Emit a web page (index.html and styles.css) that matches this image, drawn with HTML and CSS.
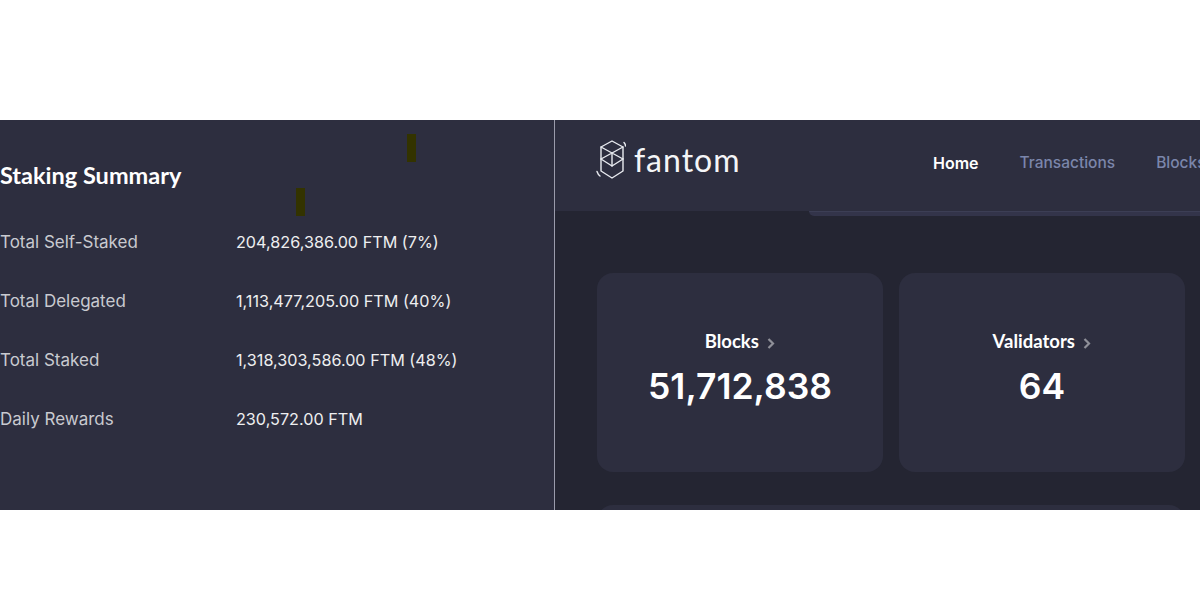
FILE: index.html
```html
<!DOCTYPE html>
<html lang="en">
<head>
    <meta charset="UTF-8">
    <meta name="viewport" content="width=device-width, initial-scale=1.0">
    <title>Fantom Staking Summary</title>
    <link rel="stylesheet" href="styles.css">
</head>
<body>

    <div class="shot">
        <section class="summary">
            <span class="mark mark-top"></span>
            <span class="mark mark-low"></span>
            <h2>Staking Summary</h2>
            <div class="row"><div class="row-label">Total Self-Staked</div><div class="row-value">204,826,386.00 FTM (7%)</div></div>
            <div class="row"><div class="row-label">Total Delegated</div><div class="row-value">1,113,477,205.00 FTM (40%)</div></div>
            <div class="row"><div class="row-label">Total Staked</div><div class="row-value">1,318,303,586.00 FTM (48%)</div></div>
            <div class="row"><div class="row-label">Daily Rewards</div><div class="row-value">230,572.00 FTM</div></div>
        </section>

        <section class="explorer">
            <header class="topbar">
                <div class="logo">
                    <svg class="logo-icon" width="30" height="39" viewBox="0 0 30 39" fill="none" stroke="#e9ebf0" stroke-width="1.4" stroke-linejoin="round" stroke-linecap="round">
                        <!-- prism outline -->
                        <path d="M16 1 L27 7 V31 L16 38 L5 31 V7 Z"/>
                        <path d="M5 7 L27 19 M27 7 L5 19"/>
                        <path d="M5 19 L16 26 L27 19"/>
                        <path d="M16 13 V26"/>
                        <!-- little swirl ticks -->
                        <path d="M28 2.5 Q29.5 4 29.5 6"/>
                        <path d="M1 31.5 Q2 34.5 4 36"/>
                    </svg>
                    <span class="logo-text">fantom</span>
                </div>
                <nav class="nav">
                    <a class="nav-item active">Home</a>
                    <a class="nav-item">Transactions</a>
                    <a class="nav-item">Blocks</a>
                </nav>
            </header>
            <div class="subbar"></div>

            <div class="cards">
                <div class="card">
                    <div class="card-title">Blocks
                        <svg class="chevron" width="8" height="11" viewBox="0 0 8 11" fill="none" stroke="#8f9099" stroke-width="2.2"><path d="M1.5 1 L6 5.5 L1.5 10"/></svg>
                    </div>
                    <div class="card-number">51,712,838</div>
                </div>
                <div class="card">
                    <div class="card-title">Validators
                        <svg class="chevron" width="8" height="11" viewBox="0 0 8 11" fill="none" stroke="#8f9099" stroke-width="2.2"><path d="M1.5 1 L6 5.5 L1.5 10"/></svg>
                    </div>
                    <div class="card-number">64</div>
                </div>
            </div>

            <div class="next-card"></div>
        </section>
    </div>

</body>
</html>
```

FILE: styles.css
```css
body {
    margin: 0;
    background-color: #fff;
    font-family: 'Inter', sans-serif;
}
.shot {
    display: flex;
    width: 1200px;
    height: 390px;
    margin-top: 120px;
    overflow: hidden;
}
.summary {
    position: relative;
    width: 554px;
    flex-shrink: 0;
    background-color: #2d2e3f;
    color: #fff;
}
.summary h2 {
    margin: 0;
    padding-top: 41px;
    font-size: 23.5px;
    line-height: 28px;
    font-weight: 700;
    font-family: 'Lato', sans-serif;
    height: 51px;
}
.row {
    display: flex;
    height: 59px;
    align-items: center;
    font-size: 16.2px;
}
.row-label {
    width: 236px;
    font-size: 17px;
    color: #c9cad0;
}
.row-value {
    color: #eeeef0;
}
.mark {
    position: absolute;
    width: 9px;
    height: 28px;
    background-color: #333300;
}
.mark-top {
    left: 407px;
    top: 14px;
}
.mark-low {
    left: 296px;
    top: 68px;
}
.explorer {
    position: relative;
    flex: 1;
    min-width: 0;
    border-left: 1px solid #9a9bab;
    background-color: #242532;
    overflow: hidden;
}
.topbar {
    display: flex;
    align-items: center;
    height: 91px;
    box-sizing: border-box;
    padding: 0 0 12px 41px;
    background-color: #2d2e3f;
}
.logo {
    display: flex;
    align-items: center;
    gap: 8px;
    width: 337px;
    flex-shrink: 0;
}
.logo-text {
    font-family: 'Lato', sans-serif;
    font-size: 32px;
    letter-spacing: 1px;
    line-height: 39px;
    color: #f4f5f7;
}
.nav {
    display: flex;
    gap: 41px;
    margin-top: 7px;
    white-space: nowrap;
    font-size: 15.5px;
    font-weight: 500;
}
.nav-item {
    color: #7b86ab;
}
.nav-item.active {
    color: #fff;
    font-size: 16px;
    font-weight: 600;
}
.subbar {
    height: 5px;
    margin-left: 254px;
    background-color: #33344a;
    border-top: 1px solid #3c3e55;
    border-bottom-left-radius: 10px;
    box-sizing: border-box;
}
.cards {
    display: flex;
    gap: 16px;
    padding: 57px 15px 0 42px;
}
.card {
    flex: 1;
    height: 199px;
    box-sizing: border-box;
    padding-top: 57px;
    background-color: #2d2e3f;
    border-radius: 16px;
    text-align: center;
    color: #fff;
}
.card-title {
    font-family: 'Lato', sans-serif;
    font-size: 18.5px;
    font-weight: 700;
    line-height: 22px;
}
.chevron {
    margin-left: 4px;
    vertical-align: -1px;
}
.card-number {
    font-size: 35.5px;
    font-weight: 600;
    line-height: 44px;
    margin-top: 13px;
}
.next-card {
    height: 20px;
    margin: 33px 15px 0 42px;
    background-color: #2d2e3f;
    border-radius: 16px 16px 0 0;
}
```
